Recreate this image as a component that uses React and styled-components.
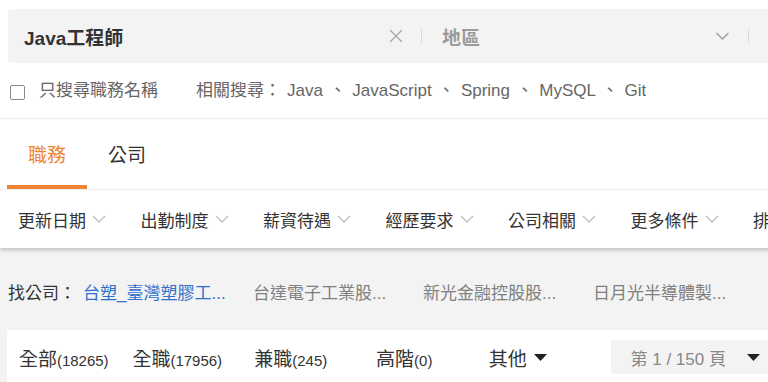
import React from "react";
import styled, { createGlobalStyle } from "styled-components";

const GlobalStyle = createGlobalStyle`
	html, body {
		margin: 0;
		padding: 0;
		overflow: hidden;
		background: #f3f3f3;
	}
	body {
		font-family: "Liberation Sans", "Noto Sans CJK TC", sans-serif;
		color: #333;
	}
`;

const Page = styled.div`
	width: 820px;
`;

const Header = styled.header`
	background: #fff;
	padding-top: 9px;
	position: relative;
	z-index: 2;
	box-shadow: 0 2px 4px rgba(0, 0, 0, 0.22);
`;

const SearchBar = styled.div`
	display: flex;
	align-items: center;
	height: 54px;
	margin-left: 8px;
	width: 812px;
	background: #f3f3f3;
	border-radius: 4px;
`;

const Keyword = styled.div`
	width: 364px;
	padding-left: 16px;
	font-size: 19px;
	font-weight: 700;
	color: #333;
`;

const IconButton = styled.span`
	display: flex;
	align-items: center;
	justify-content: center;
	width: ${(p) => p.$w || 16}px;
	height: 16px;
`;

const Divider = styled.span`
	width: 1px;
	height: 14px;
	background: #d8d8d8;
	margin: 0 ${(p) => p.$right || 0}px 0 ${(p) => p.$left || 0}px;
`;

const AreaField = styled.div`
	width: 273px;
	font-size: 19px;
	font-weight: 700;
	color: #9b9b9b;
`;

const OptionRow = styled.div`
	display: flex;
	align-items: center;
	height: 55px;
	padding-left: 10px;
	border-bottom: 1px solid #ececec;
	font-size: 17px;
	color: #666;
`;

const CheckBox = styled.span`
	width: 15px;
	height: 15px;
	box-sizing: border-box;
	border: 1.5px solid #8a8a8a;
	border-radius: 2px;
	margin-top: 3px;
`;

const CheckText = styled.span`
	margin-left: 14px;
	line-height: 18px;
`;

const Related = styled.div`
	margin-left: 38px;
	height: 18px;
	line-height: 18px;
	overflow: hidden;
	white-space: pre;
	word-spacing: 1.4px;
`;

const TabBar = styled.nav`
	display: flex;
	height: 70px;
	padding-left: 7px;
	border-bottom: 1px solid #eeeeee;
`;

const Tab = styled.div`
	box-sizing: border-box;
	width: 80px;
	height: 70px;
	padding-top: 3px;
	display: flex;
	align-items: center;
	justify-content: center;
	font-size: 19px;
	color: ${(p) => (p.$active ? "#ef8433" : "#333")};
	border-bottom: 4px solid ${(p) => (p.$active ? "#ef8433" : "transparent")};
`;

const FilterBar = styled.div`
	display: flex;
	align-items: center;
	gap: 34.5px;
	height: 58px;
	padding-left: 18px;
	white-space: nowrap;
`;

const FilterItem = styled.div`
	display: flex;
	align-items: center;
	gap: 6px;
	font-size: 17px;
	color: #333;
`;

const CompanyRow = styled.div`
	display: flex;
	align-items: center;
	padding: 36px 0 26px 8px;
	font-size: 17px;
	line-height: 20px;
	white-space: nowrap;
`;

const CompanyLabel = styled.span`
	width: 75px;
	color: #333;
`;

const CompanyLink = styled.span`
	width: 170px;
	color: ${(p) => (p.$highlight ? "#2f6fcb" : "#808080")};
`;

const JobCard = styled.section`
	display: flex;
	align-items: center;
	margin-left: 7px;
	padding: 10px 0 14px;
	background: #fff;
`;

const JobType = styled.div`
	width: 113.5px;
	height: 34px;
	display: flex;
	align-items: center;
	justify-content: center;
	gap: 7px;
	font-size: 19px;
	color: #333;
	white-space: nowrap;
`;

const Count = styled.span`
	font-size: 15px;
`;

const PageSelect = styled.div`
	display: flex;
	align-items: center;
	justify-content: space-between;
	box-sizing: border-box;
	width: 160px;
	height: 34px;
	margin-left: 36px;
	padding: 0 11px 0 20px;
	background: #f3f3f3;
	font-size: 17px;
	color: #888;
	white-space: pre;
`;

const Chevron = ({ color = "#bdbdbd", w = 14 }) => (
	<svg width={w} height="8" viewBox="0 0 14 8" fill="none">
		<polyline points="1,1 7,7 13,1" stroke={color} strokeWidth="1.3" />
	</svg>
);

const Caret = () => (
	<svg width="13" height="7" viewBox="0 0 13 7">
		<polygon points="0,0 13,0 6.5,7" fill="#222" />
	</svg>
);

const filters = ["更新日期", "出勤制度", "薪資待遇", "經歷要求", "公司相關", "更多條件", "排序方式"];
const companies = ["台塑_臺灣塑膠工...", "台達電子工業股...", "新光金融控股股...", "日月光半導體製..."];
const jobTypes = [
	{ name: "全部", count: "(18265)" },
	{ name: "全職", count: "(17956)" },
	{ name: "兼職", count: "(245)" },
	{ name: "高階", count: "(0)" },
];

const App = () => {
	return (
		<Page>
			<GlobalStyle />
			<Header>
				<SearchBar>
					<Keyword>Java工程師</Keyword>
					<IconButton>
						<svg width="16" height="16" viewBox="0 0 16 16">
							<path d="M2 2 L14 14 M14 2 L2 14" stroke="#a8a8a8" strokeWidth="1.4" />
						</svg>
					</IconButton>
					<Divider $left={17} $right={20} />
					<AreaField>地區</AreaField>
					<IconButton $w={15}>
						<Chevron color="#9a9a9a" w={15} />
					</IconButton>
					<Divider $left={18} />
				</SearchBar>
				<OptionRow>
					<CheckBox />
					<CheckText>只搜尋職務名稱</CheckText>
					<Related>相關搜尋： Java 、 JavaScript 、 Spring 、 MySQL 、 Git</Related>
				</OptionRow>
				<TabBar>
					<Tab $active>職務</Tab>
					<Tab>公司</Tab>
				</TabBar>
				<FilterBar>
					{filters.map((f) => (
						<FilterItem key={f}>
							{f}
							<Chevron />
						</FilterItem>
					))}
				</FilterBar>
			</Header>
			<CompanyRow>
				<CompanyLabel>找公司：</CompanyLabel>
				{companies.map((c, i) => (
					<CompanyLink key={c} $highlight={i === 0}>
						{c}
					</CompanyLink>
				))}
			</CompanyRow>
			<JobCard>
				{jobTypes.map((t) => (
					<JobType key={t.name}>
						<span>
							{t.name}
							<Count>{t.count}</Count>
						</span>
					</JobType>
				))}
				<JobType>
					其他
					<Caret />
				</JobType>
				<PageSelect>
					第 1 / 150 頁
					<Caret />
				</PageSelect>
			</JobCard>
		</Page>
	);
};

export default App;
